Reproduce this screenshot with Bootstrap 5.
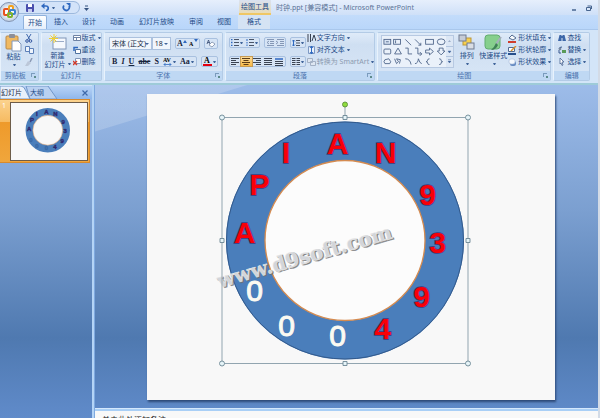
<!DOCTYPE html>
<html lang="zh-CN">
<head>
<meta charset="utf-8">
<meta name="viewport" content="width=device-width, initial-scale=1">
<title>时钟.ppt [兼容模式] - Microsoft PowerPoint</title>
<link rel="stylesheet" href="https://cdn.jsdelivr.net/npm/bootstrap@5.3.0/dist/css/bootstrap.min.css">
<style>
body{font:7px/10px "Noto Sans","Noto Sans CJK SC",sans-serif;color:#234a86;background:#bfdbff;overflow:hidden;border-right:2px solid #d3dbe6}
button,select{font:inherit;color:inherit;border:0;background:none;padding:0;margin:0;white-space:nowrap}
svg{display:block;flex:none}
.titlebar{height:15px;background:linear-gradient(#e6effc,#cfe0f8);position:relative}
.orb{position:absolute;left:-1px;top:1px;z-index:3}
.quick{margin-left:17px;height:13px;padding:0 8px 0 9px;gap:7px;border:1px solid #9db9dd;border-left:0;border-radius:0 7px 7px 0;background:#d3e3f9}
.ctxhead{position:absolute;left:239px;width:32px;height:15px;line-height:13px;text-align:center;background:linear-gradient(#d9e2f1,#e9dcb8);border-bottom:2px solid #efc765}
.doctitle{margin-left:187px;color:#5b7396;line-height:15px}
.wincontrols{margin-left:auto;gap:9px;padding-right:6px}
.tabsrow{height:14px;padding-left:23px;background:linear-gradient(#c3dcfb,#b9d6fa)}
.tabsrow button{padding:0 7px;line-height:14px}
.tabsrow .active{background:linear-gradient(#fff,#e4eefb);border:1px solid #8fb1dc;border-bottom:0;border-radius:2px 2px 0 0;padding:0 4px;line-height:12px}
.tabsrow .long{padding:0 8px}
.tabsrow .fmt{padding:0 9px;background:#d5e3f4}
.ribbon{height:56px;padding:2px 8px 2px 0;gap:2px;background:#d3e5f8;border-top:1px solid #a9c7ec;border-bottom:2px solid #9ecbd8}
.grp{border:1px solid #b3cbe6;border-left-color:#e8f2fc;border-radius:2px;background:linear-gradient(#dfebf9,#cfdff2 25%,#d8e6f6);min-width:0;flex-basis:0}
.grp .tools{flex:1;min-height:0}
.grp .cap{height:9px;line-height:9px;text-align:center;background:#bfd8f3;color:#4a72ad;position:relative}
.launch::after{content:"";position:absolute;right:3px;top:2px;width:4px;height:4px;border:1px solid #7b9cbd;border-right:0;border-bottom:0}
.launch::before{content:"";position:absolute;right:2px;top:5px;width:2px;height:2px;background:#5d8b8b}
.caret::after{content:"";display:inline-block;border:1px solid transparent;border-top:2px solid #41659b;border-bottom:0;width:3px;margin-left:3px;vertical-align:2px}
.big{display:flex;flex-direction:column;align-items:center;line-height:9px;padding-top:1px}
.big .caret::after{margin-left:2px}
.smalls{display:flex;flex-direction:column;gap:2px}
.smalls button{display:flex;align-items:center;gap:1px;height:10px;line-height:10px}
.smalls .caret::after{margin-left:1px}
.tight{gap:1px;padding-left:3px}
.snug{gap:2px;padding-left:3px}
.arrange{padding-left:3px;padding-right:3px}
.gallery{height:33px;border:1px solid #b7c9e2;background:#eaf1fa;margin-top:2px}
.strip{display:flex;align-items:center;height:11px;border:1px solid #a9c1e0;border-radius:2px;background:#d6e4f5;color:#16243c}
.strip button{flex:1 1 auto;display:flex;justify-content:center;align-items:center;height:9px;padding:0 1px}
.strip .caret::after{margin-left:1px}
.serif{font:bold 8px/9px "Liberation Serif",serif}
.combo{height:13px;border:1px solid #abc1de;background:#f1f6fc url("data:image/svg+xml,%3Csvg xmlns='http://www.w3.org/2000/svg' width='4' height='2'%3E%3Cpath d='M0 0h4L2 2z' fill='%2341659b'/%3E%3C/svg%3E") no-repeat right 2px center;appearance:none;color:#222d45;padding-left:2px;border-radius:0;min-width:0}
.w-name{flex:53}.w-size{flex:21}
.on{background:linear-gradient(#fbdc9a,#f9b945);outline:1px solid #c79b53}
.off{color:#8d9bb0}
.work{background:linear-gradient(#9dbce9,#7b9fd0 38%,#4f79b0 76%,#608bca)}
.sidepane{width:92px}
.panetabs{height:14px;background:linear-gradient(#b9d4f7,#8fb6ea);border-top:1px solid #cfe2fa}
.front{margin-left:1px;color:#16243c}
.thumbrow{background:linear-gradient(#fbd28d,#f6bb62 35%,#ee9a2b 36%,#f0a63c);border:1px solid #d98a2c;border-left:0;padding:2px 1px 1px 0;margin-right:2px;color:#fff;line-height:8px}
.thumb{background:#f8f8f8;border:1px solid #6d5c49;min-width:0}
.slideno{width:10px;padding-left:2px;flex:none}
.vsplit{width:3px;background:#b4d4f6;border-right:1px solid #7fa9df}
.stage{padding:9px 43px 8px 52px;background:linear-gradient(163deg,#ffffff2e 0,#ffffff2e 44px,transparent 45px)}
.slidepage{background:#f8f8f8;box-shadow:1px 2px 2px #2d4a78}
.hsplit{height:3px;background:#a9cff6;border-top:1px solid #d5e8fc}
.notes{height:7px;overflow:hidden;background:#f8f8f8;color:#222;padding:4px 0 0 7px;line-height:9px;font-size:8px}
.let{font:bold 30px "Liberation Sans",sans-serif;text-anchor:middle;fill:#f80008;stroke:#3d3a80;stroke-width:1.6;paint-order:stroke}
.zero{font-weight:normal;fill:#fbfaf2;stroke:#fbfaf2;stroke-width:1}
.wm{font:bold 20px "DejaVu Serif",serif}
</style>
<script src="https://cdn.jsdelivr.net/npm/bootstrap@5.3.0/dist/js/bootstrap.bundle.min.js"></script>
</head>
<body class="vh-100 d-flex flex-column">
<header>
  <div class="titlebar d-flex align-items-center">
    <button class="orb" aria-label="Office"><svg width="21" height="22" viewBox="0 0 21 22"><defs><radialGradient id="og"><stop offset=".3" stop-color="#fff"/><stop offset="1" stop-color="#bccbe0"/></radialGradient></defs><circle cx="10" cy="11" r="9.5" fill="url(#og)" stroke="#8294b3"/><g fill="none" stroke-width="2"><rect x="5" y="8" width="5" height="6" rx="1" stroke="#e8531f"/><rect x="10" y="5" width="4" height="4" rx="1" stroke="#f2a11c"/><rect x="11" y="9" width="5" height="4" rx="1" stroke="#3b82d0"/><rect x="9" y="12" width="4" height="4" rx="1" stroke="#7db32b"/></g></svg></button>
    <div class="quick d-flex align-items-center">
      <button aria-label="保存"><svg width="8" height="8"><rect width="8" height="8" rx="1" fill="#4a4fae"/><path d="M2 0h4v3H2z" fill="#fff"/><path d="M2 5h4v3H2z" fill="#c8cdf0"/></svg></button>
      <button class="d-flex align-items-center caret" aria-label="撤消"><svg width="8" height="9"><path d="M1.500 3h3.500a2 2 0 0 1 0 4.500" fill="none" stroke="#2f69c0" stroke-width="1.700"/><path d="M0 3l3.500-3v6z" fill="#2f69c0"/></svg></button>
      <button aria-label="重复"><svg width="9" height="9"><path d="M2 2.500A3 3 0 1 0 7 3" fill="none" stroke="#2f69c0" stroke-width="1.700"/><path d="M4 0h4.500v4z" fill="#2f69c0"/></svg></button>
    </div>
    <button class="ms-1" aria-label="自定义快速访问工具栏"><svg width="5" height="6"><path d="M1 1h3" stroke="#35537f"/><path d="M0 3h5L2.500 6z" fill="#35537f"/></svg></button>
    <div class="ctxhead">绘图工具</div>
    <div class="doctitle text-nowrap">时钟.ppt [兼容模式] - Microsoft PowerPoint</div>
    <div class="wincontrols d-flex align-items-center">
      <button aria-label="最小化"><svg width="5" height="6"><path d="M0 5h4" stroke="#47658f" stroke-width="1.500"/></svg></button>
      <button aria-label="还原"><svg width="6" height="6"><path d="M1.500 1h4v3M.500 2.500h4v3h-4z" fill="none" stroke="#47658f"/></svg></button>
    </div>
  </div>
  <nav class="tabsrow d-flex" aria-label="功能区">
    <button class="active">开始</button><button>插入</button><button>设计</button><button>动画</button><button class="long">幻灯片放映</button><button>审阅</button><button>视图</button><button class="fmt">格式</button>
  </nav>
  <div class="ribbon d-flex">
    <section class="grp d-flex flex-column" style="flex-grow:37">
      <div class="tools d-flex justify-content-between px-1">
        <button class="big"><svg width="17" height="18"><rect x="1" y="2" width="12" height="13" rx="1" fill="#f0b961" stroke="#b98a4a"/><rect x="4" y="0" width="6" height="4" rx="1" fill="#8d8f98"/><path d="M7 7h6l3 3v7H7z" fill="#fff" stroke="#8299bd"/></svg><span>粘贴</span><span class="caret"></span></button>
        <div class="smalls">
          <button aria-label="剪切"><svg width="8" height="9"><path d="M1.500 0L5 6M6 0L2.500 6" stroke="#3f68ac"/><circle cx="2" cy="7" r="1.300" fill="none" stroke="#3557a0"/><circle cx="5.500" cy="7" r="1.300" fill="none" stroke="#3557a0"/></svg></button>
          <button aria-label="复制"><svg width="9" height="8"><path d="M.5.500h4v5h-4zM4.500 2.500h4v5h-4z" fill="#eef4fc" stroke="#5c80b9"/></svg></button>
          <button aria-label="格式刷"><svg width="8" height="8"><path d="M7 0L5 4" stroke="#8b9ab5" stroke-width="1.500"/><path d="M3 3l3 2-3 3H0z" fill="#bcc7d8"/></svg></button>
        </div>
      </div>
      <div class="cap launch pe-2">剪贴板</div>
    </section>
    <section class="grp d-flex flex-column" style="flex-grow:60">
      <div class="tools d-flex snug">
        <button class="big"><svg width="18" height="17"><rect x="4" y="4" width="13" height="11" fill="#f5f8fd" stroke="#8096b8"/><path d="M6 7h9v1H6z" fill="#9aabc8"/><path d="M5 0v9M0 4.500h9M1.500 1.500l6 6M7.500 1.500l-6 6" stroke="#efcf34"/></svg><span>新建</span><span class="caret">幻灯片</span></button>
        <div class="smalls">
          <button class="caret"><svg width="8" height="8"><path d="M.5 1.500h7v5h-7zM.5 3.500h7M3.500 3.500v3" fill="#fff" stroke="#6e83a5"/></svg>版式</button>
          <button><svg width="8" height="8"><path d="M2.500 3.500h5v4h-5z" fill="#fff" stroke="#50729f"/><path d="M1 5V1.500h4" fill="none" stroke="#2f69c0" stroke-width="1.500"/></svg>重设</button>
          <button><svg width="8" height="8"><path d="M2.500.500h5v5h-5z" fill="#fff" stroke="#8096b8"/><path d="M0 3l4 4M4 3L0 7" stroke="#d33a2a" stroke-width="1.400"/></svg>删除</button>
        </div>
      </div>
      <div class="cap">幻灯片</div>
    </section>
    <section class="grp d-flex flex-column" style="flex-grow:118">
      <div class="tools d-flex flex-column justify-content-between px-1 py-1">
        <div class="d-flex align-items-center">
          <select class="combo w-name" aria-label="字体"><option>宋体 (正文)</option></select><select class="combo w-size me-1" aria-label="字号"><option>18</option></select>
          <div class="strip serif me-1"><button>A<svg width="4" height="7"><path d="M0 3h4L2 0z" fill="#2f69c0"/></svg></button><button aria-label="减小字号"><svg width="9" height="9"><text x="0" y="7" font-size="6">A</text><path d="M5 0h4L7 3z" fill="#2f69c0"/></svg></button></div>
          <div class="strip"><button aria-label="清除格式"><svg width="10" height="9"><path d="M1 5l1.500-4L4 5M1.500 3.500h2" fill="none" stroke="#33476e" stroke-width=".8"/><path d="M3 6l3-3 3 2-3 3z" fill="#fff" stroke="#6b7e9e" stroke-width=".7"/></svg></button></div>
        </div>
        <div class="d-flex align-items-center gap-1">
          <div class="strip serif flex-fill"><button>B</button><button><i>I</i></button><button><u>U</u></button><button><s>abc</s></button><button>S</button><button class="caret" aria-label="字符间距"><svg width="9" height="9"><text x="0" y="5" font-size="6">AV</text><path d="M1 7.500h7M2.500 6L1 7.500 2.500 9M6.500 6L8 7.500 6.500 9" fill="none" stroke="#2f69c0" stroke-width=".8"/></svg></button><button class="caret">Aa</button></div>
          <div class="strip serif"><button class="caret" aria-label="字体颜色"><svg width="9" height="9"><text x="1" y="6" font-size="8">A</text><path d="M0 8h9" stroke="#e3000f" stroke-width="2"/></svg></button></div>
        </div>
      </div>
      <div class="cap launch">字体</div>
    </section>
    <section class="grp d-flex flex-column" style="flex-grow:150">
      <div class="tools d-flex tight">
        <div class="d-flex flex-column justify-content-between flex-fill py-1">
          <div class="d-flex gap-1">
            <div class="strip" style="flex:35"><button class="caret" aria-label="项目符号"><svg width="8" height="7"><path d="M3 .500h5M3 3.500h5M3 6.500h5" stroke="#4a5568"/><path d="M0 .500h1.500M0 3.500h1.500M0 6.500h1.500" stroke="#2f69c0" stroke-width="1.400"/></svg></button><button class="caret" aria-label="编号"><svg width="8" height="7"><path d="M3 .500h5M3 3.500h5M3 6.500h5" stroke="#4a5568"/><path d="M1 0v2M1 3v1.500M1 5.500v1.500" stroke="#2f69c0"/></svg></button></div>
            <div class="strip" style="flex:22"><button aria-label="减少缩进"><svg width="8" height="7"><path d="M1 .500h7M4 2.500h4M4 4.500h4M1 6.500h7M3 2L1 3.500 3 5" fill="none" stroke="#8497b5"/></svg></button><button aria-label="增加缩进"><svg width="8" height="7"><path d="M1 .500h7M4 2.500h4M4 4.500h4M1 6.500h7M0 2l2 1.500L0 5" fill="none" stroke="#8497b5"/></svg></button></div>
            <div class="strip" style="flex:13"><button class="caret" aria-label="行距"><svg width="8" height="8"><path d="M4 1.500h4M4 4h4M4 6.500h4" stroke="#4a5568"/><path d="M1.500 1v6M0 2.500L1.500 1 3 2.500M0 5.500L1.500 7 3 5.500" fill="none" stroke="#2f69c0"/></svg></button></div>
          </div>
          <div class="d-flex gap-1">
            <div class="strip" style="flex:61">
              <button aria-label="左对齐"><svg width="8" height="7"><path d="M0 .500h8M0 2.500h5M0 4.500h8M0 6.500h5" stroke="#3a4352"/></svg></button>
              <button class="on" aria-label="居中"><svg width="8" height="7"><path d="M0 .500h8M1.500 2.500h5M0 4.500h8M1.500 6.500h5" stroke="#5b3c17"/></svg></button>
              <button aria-label="右对齐"><svg width="8" height="7"><path d="M0 .500h8M3 2.500h5M0 4.500h8M3 6.500h5" stroke="#3a4352"/></svg></button>
              <button aria-label="两端对齐"><svg width="8" height="7"><path d="M0 .500h8M0 2.500h8M0 4.500h8M0 6.500h8" stroke="#3a4352"/></svg></button>
              <button aria-label="分散对齐"><svg width="8" height="8"><path d="M0 3.500h8M0 5.500h8M0 7.500h8" stroke="#3a4352"/><path d="M0 1h8" stroke="#2f69c0" stroke-width="1.500"/></svg></button>
            </div>
            <div class="strip" style="flex:14"><button class="caret" aria-label="分栏"><svg width="8" height="7"><path d="M0 .500h3.500M0 2.500h3.500M0 4.500h3.500M0 6.500h3.500M4.500.500H8M4.500 2.500H8M4.500 4.500H8M4.500 6.500H8" stroke="#3a4352"/></svg></button></div>
          </div>
        </div>
        <div class="smalls">
          <button class="caret"><svg width="9" height="8"><path d="M1 0v8M3.500 0v8" stroke="#3a4352"/><path d="M5 7l2-6 2 6" fill="none" stroke="#3a4352"/></svg>文字方向</button>
          <button class="caret"><svg width="9" height="8"><path d="M1.500.500h6v7h-6z" fill="#e9f1fb" stroke="#7d99c4"/><path d="M4.500 0v8M3 2l1.500-2L6 2M3 6l1.500 2L6 6" fill="none" stroke="#2f69c0"/></svg>对齐文本</button>
          <button class="caret off"><svg width="9" height="8"><path d="M.5.500h5v4h-5zM3.500 3.500h5v4h-5z" fill="#dde6f1" stroke="#a3b1c5"/></svg>转换为 SmartArt</button>
        </div>
      </div>
      <div class="cap launch">段落</div>
    </section>
    <section class="grp d-flex flex-column" style="flex-grow:174">
      <div class="tools d-flex align-items-start tight">
        <div class="gallery d-flex">
          <svg width="64" height="31" viewBox="0 0 66 31" fill="none" stroke="#4c6388" stroke-width=".9"><rect x="2" y="3" width="7" height="5" fill="#dbe6f5"/><path d="M4 5.500h3"/><rect x="12" y="3" width="7" height="5"/><path d="M14 4v3M24 3l6 6M34 3l6 6M40 6.500V9h-2.500"/><rect x="45" y="3" width="8" height="5"/><ellipse cx="61" cy="5.500" rx="4" ry="3"/><rect x="2" y="13" width="7" height="5" rx="1"/><path d="M13 18l3.500-6 3.500 6zM24 12h3v6h4M34 12h3v6h4M39 16l2 2-2 2M45 14h4v-2l4 3.500-4 3.500v-2h-4zM59 12h4v3h2l-4 4-4-4h2z"/><path d="M3 28h5l1-2-2-3-4 1-1 2zM13 23l2 5 2-2-2-3 4 1-1 4M24 23q5 0 6 6M34 28q3 0 3.500-5Q39 28 41 28M49 23q-2 0-2 1.500T45.500 26q1.500 0 1.500 1.500t2 1.500M59 23q2 0 2 1.500t1.500 1.500Q61 26 61 27.500T59 29"/></svg>
          <svg width="7" height="31" viewBox="0 0 7 31"><path d="M0 0h7v31H0z" fill="#dce7f5"/><path d="M0 10.500h7M0 20.500h7" stroke="#b2c5df"/><path d="M2 6h3L3.500 4z" fill="#9fb0ca"/><path d="M2 15h3L3.500 17zM2 25h3L3.500 27zM2 23.500h3" fill="#41659b" stroke="#41659b" stroke-width=".4"/></svg>
        </div>
        <button class="big arrange"><svg width="17" height="17"><rect x="5" y="4" width="8" height="7" fill="#f8d04c" stroke="#bb963a"/><rect x="1" y="1" width="7" height="6" fill="#c6ccd6" stroke="#6e7b91"/><rect x="9" y="9" width="7" height="6" fill="#d9dde4" stroke="#6e7b91"/></svg><span>排列</span><span class="caret"></span></button>
        <button class="big"><svg width="18" height="17"><rect x="1" y="1" width="15" height="14" rx="3" fill="#86cf8d" stroke="#62ad70"/><path d="M17 3l-5 7" stroke="#a4afba" stroke-width="2"/><path d="M12 9l2 2q-2 5-7 5 3-2 5-7" fill="#3f8057"/></svg><span>快速样式</span><span class="caret"></span></button>
        <div class="smalls">
          <button class="caret"><svg width="9" height="9"><path d="M1 4l3-3 4 3-3 2z" fill="#f8fafc" stroke="#536b90"/><path d="M0 8h8" stroke="#cf3d2c" stroke-width="2"/></svg>形状填充</button>
          <button class="caret"><svg width="9" height="9"><path d="M.5 1.500h6v4h-6z" fill="#fff" stroke="#536b90"/><path d="M8 0L3 5" stroke="#d49132" stroke-width="1.500"/><path d="M0 8h8" stroke="#274f8c" stroke-width="2"/></svg>形状轮廓</button>
          <button class="caret"><svg width="9" height="9"><rect x="2" y="3" width="6" height="5" rx="2" fill="#678cc2"/><rect x="1" y="1" width="6" height="5" rx="2" fill="#f4f8fd" stroke="#a4b9d8" stroke-width=".6"/></svg>形状效果</button>
        </div>
      </div>
      <div class="cap launch">绘图</div>
    </section>
    <section class="grp d-flex flex-column" style="flex-grow:35">
      <div class="tools smalls ps-1">
        <button><svg width="8" height="8"><path d="M0 7l1.500-6h2v6zM4.500 7V1h2L8 7z" fill="#3c66a8"/><path d="M3 3h2" stroke="#3c66a8" stroke-width="2"/></svg>查找</button>
        <button class="caret"><svg width="8" height="8"><path d="M1 3q0-2 3-2M1 4v3h2" fill="none" stroke="#39598e"/><circle cx="2" cy="3" r="1.300" fill="#78899f"/><rect x="4" y="4" width="4" height="3" fill="#5a9b57"/></svg>替换</button>
        <button class="caret"><svg width="8" height="8"><path d="M2 0l4 4H4l1 3-1 .500L3 5 2 6z" fill="#fff" stroke="#4a6592" stroke-width=".8"/></svg>选择</button>
      </div>
      <div class="cap">编辑</div>
    </section>
  </div>
</header>
<main class="work d-flex flex-fill" style="min-height:0">
  <aside class="sidepane flex-shrink-0">
    <div class="panetabs d-flex align-items-center position-relative">
      <svg class="position-absolute top-0 start-0" width="60" height="13"><path d="M26 0h22l9 13H30z" fill="#b9d1f1" stroke="#7397c9"/><path d="M0 0h21q3 0 5 5l4 8H0z" fill="#e8f1fc" stroke="#7397c9"/></svg>
      <button class="front position-relative">幻灯片</button><button class="position-relative ms-2">大纲</button>
      <button class="ms-auto pe-1" aria-label="关闭"><svg width="6" height="6"><path d="M.5.500l5 5M5.500.500l-5 5" stroke="#3f69a9" stroke-width="1.200"/></svg></button>
    </div>
    <div class="thumbrow d-flex"><span class="slideno">1</span>
      <div class="thumb flex-fill"><svg class="w-100 h-auto" viewBox="0 0 407 306" aria-hidden="true"><g><circle cx="197" cy="146" r="99.500" fill="none" stroke="#4a7ebb" stroke-width="39"/><circle cx="197" cy="146" r="80" fill="none" stroke="#d69a6b" stroke-width="3"/></g><g font-family="Liberation Sans" font-weight="bold" font-size="32" text-anchor="middle" fill="#31286e" stroke="#31286e" stroke-width="2"><text x="190" y="60">A</text><text x="138" y="69">I</text><text x="238" y="69">N</text><text x="112" y="101">P</text><text x="280" y="111">9</text><text x="97" y="149">A</text><text x="290" y="159">3</text><text x="274" y="213">9</text><text x="235" y="245">4</text><g fill="#3a69a5" stroke="#3a69a5"><text x="107" y="207">0</text><text x="139" y="242">0</text><text x="190" y="252">0</text></g></g></svg></div>
    </div>
  </aside>
  <div class="vsplit flex-shrink-0"></div>
  <div class="flex-fill d-flex flex-column" style="min-width:0">
    <div class="stage flex-fill" style="min-height:0">
      <div class="slidepage h-100">
        <svg class="w-100 h-100" viewBox="0 0 407 306">
          <circle cx="197.500" cy="146.500" r="99.500" fill="none" stroke="#4a7ebb" stroke-width="39"/>
          <circle cx="197.500" cy="146.500" r="118.500" fill="none" stroke="#335a8c"/>
          <circle cx="197.500" cy="146.500" r="80" fill="#fff" fill-opacity=".5" stroke="#d58b50" stroke-width="1.300"/>
          <g class="let"><text x="190" y="60">A</text><text x="138.500" y="69">I</text><text x="238" y="69">N</text><text x="112" y="101">P</text><text x="280" y="111">9</text><text x="97" y="149">A</text><text x="290" y="159">3</text><text x="274" y="213">9</text><text x="235" y="245">4</text><g class="zero"><text x="107" y="207">0</text><text x="139" y="242">0</text><text x="190" y="252">0</text></g></g>
          <g class="wm" transform="translate(72 194) rotate(-16)"><text x="1" y="1" fill="#707070" fill-opacity=".75" stroke="#707070" stroke-opacity=".6">www.d9soft.com</text><text fill="#d2d5da" stroke="#eee" stroke-width=".4">www.d9soft.com</text></g>
          <g fill="none" stroke="#92a5b0"><path d="M74.500 23.500h246v246h-246zM197.500 11v12"/></g>
          <g fill="#e6f4f8" stroke="#6c8794" stroke-width=".9"><circle cx="74.500" cy="23.500" r="2.500"/><circle cx="320.500" cy="23.500" r="2.500"/><circle cx="74.500" cy="269.500" r="2.500"/><circle cx="320.500" cy="269.500" r="2.500"/><path d="M195.500 21.500h4v4h-4zM195.500 267.500h4v4h-4zM72.500 144.500h4v4h-4zM318.500 144.500h4v4h-4z"/><circle cx="197.500" cy="10.500" r="2.500" fill="#8fdc3c" stroke="#5b8f3c"/></g>
        </svg>
      </div>
    </div>
    <div class="hsplit flex-shrink-0"></div>
    <div class="notes flex-shrink-0">单击此处添加备注</div>
  </div>
</main>
</body>
</html>
